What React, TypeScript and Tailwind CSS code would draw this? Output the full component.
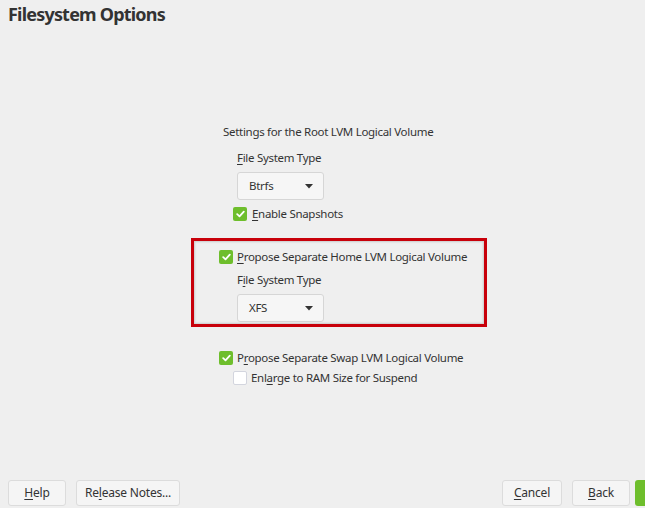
import { useState } from "react";

const GREEN = "bg-[#6ebe2c]";

function Check({ checked }: { checked: boolean }) {
  return checked ? (
    <span className={`flex h-[14px] w-[14px] shrink-0 items-center justify-center rounded-[2px] ${GREEN}`}>
      <svg width="9" height="8" viewBox="0 0 9 8" fill="none">
        <path d="M1.2 4.2 3.5 6.3 7.8 1.6" stroke="white" strokeWidth="1.8" strokeLinecap="round" strokeLinejoin="round" />
      </svg>
    </span>
  ) : (
    <span className="h-[14px] w-[14px] shrink-0 rounded-[2px] border border-[#d3d5de] bg-white" />
  );
}

// label with an underlined mnemonic letter
function Mn({ text, at }: { text: string; at: number }) {
  return (
    <>
      {text.slice(0, at)}
      <span className="underline decoration-1 underline-offset-2">{text[at]}</span>
      {text.slice(at + 1)}
    </>
  );
}

function Combo({ value }: { value: string }) {
  return (
    <div className="flex h-[28px] w-[87px] items-center justify-between rounded-[3px] border border-[#d6d6d6] bg-[#f6f6f6] pl-[11px] pr-[10px]">
      <span>{value}</span>
      <svg width="8" height="5" viewBox="0 0 8 5">
        <path d="M0 0h8L4 4.5z" fill="#333" />
      </svg>
    </div>
  );
}

function Btn({ children, w }: { children: React.ReactNode; w: string }) {
  return (
    <button className={`h-[26px] ${w} whitespace-nowrap rounded-[3px] border border-[#dcdcdc] bg-[#f5f5f5] text-[12px] tracking-[-0.2px] text-[#333]`}>
      {children}
    </button>
  );
}

export default function App() {
  const [snap] = useState(true);

  return (
    <div
      className="flex h-[508px] w-[645px] flex-col overflow-hidden whitespace-nowrap bg-[#efefef] text-[11.5px] tracking-[-0.3px] text-[#333]"
      style={{ fontFamily: '"Noto Sans", sans-serif' }}
    >
      <h1 className="ml-[8px] mt-[1px] text-[18px] font-bold leading-[26px] tracking-[-0.8px] text-[#333]">
        Filesystem Options
      </h1>

      <main className="flex-1">
        <div className="ml-[191px] mt-[96px] w-[296px]">
          <p className="ml-[32px] leading-[18px]">Settings for the Root LVM Logical Volume</p>
          <div className="ml-[46px] mt-[8px]">
            <p className="leading-[18px]"><Mn text="File System Type" at={0} /></p>
            <div className="mt-[5px]"><Combo value="Btrfs" /></div>
            <label className="-ml-[4px] mt-[7px] flex items-center gap-[5px] leading-[14px]">
              <Check checked={snap} />
              <span><Mn text="Enable Snapshots" at={0} /></span>
            </label>
          </div>

          {/* highlighted block */}
          <div className="mt-[17px] h-[89px] border-[3px] border-[#c8000a] pl-[25px] pt-[9px] shadow-[inset_0_0_2px_1px_rgba(0,0,0,0.15)]">
            <label className="flex items-center gap-[4px] leading-[14px]">
              <Check checked />
              <span><Mn text="Propose Separate Home LVM Logical Volume" at={0} /></span>
            </label>
            <div className="ml-[18px] mt-[7px]">
              <p className="leading-[18px]"><Mn text="File System Type" at={1} /></p>
              <div className="mt-[5px]"><Combo value="XFS" /></div>
            </div>
          </div>

          <div className="ml-[28px] mt-[24px]">
            <label className="flex items-center gap-[4px] leading-[14px]">
              <Check checked />
              <span><Mn text="Propose Separate Swap LVM Logical Volume" at={1} /></span>
            </label>
            <label className="ml-[14px] mt-[6px] flex items-center gap-[4px] leading-[14px]">
              <Check checked={false} />
              <span><Mn text="Enlarge to RAM Size for Suspend" at={3} /></span>
            </label>
          </div>
        </div>
      </main>

      <footer className="mb-[2px] flex items-center gap-[10px] pl-[8px]">
        <Btn w="w-[58px]"><Mn text="Help" at={0} /></Btn>
        <Btn w="w-[104px]"><Mn text="Release Notes..." at={2} /></Btn>
        <div className="flex-1" />
        <Btn w="w-[60px]"><Mn text="Cancel" at={0} /></Btn>
        <Btn w="w-[58px]"><Mn text="Back" at={0} /></Btn>
        <div className={`-mr-[6px] -ml-[5px] h-[26px] w-[16px] rounded-l-[3px] ${GREEN}`} />
      </footer>
    </div>
  );
}
